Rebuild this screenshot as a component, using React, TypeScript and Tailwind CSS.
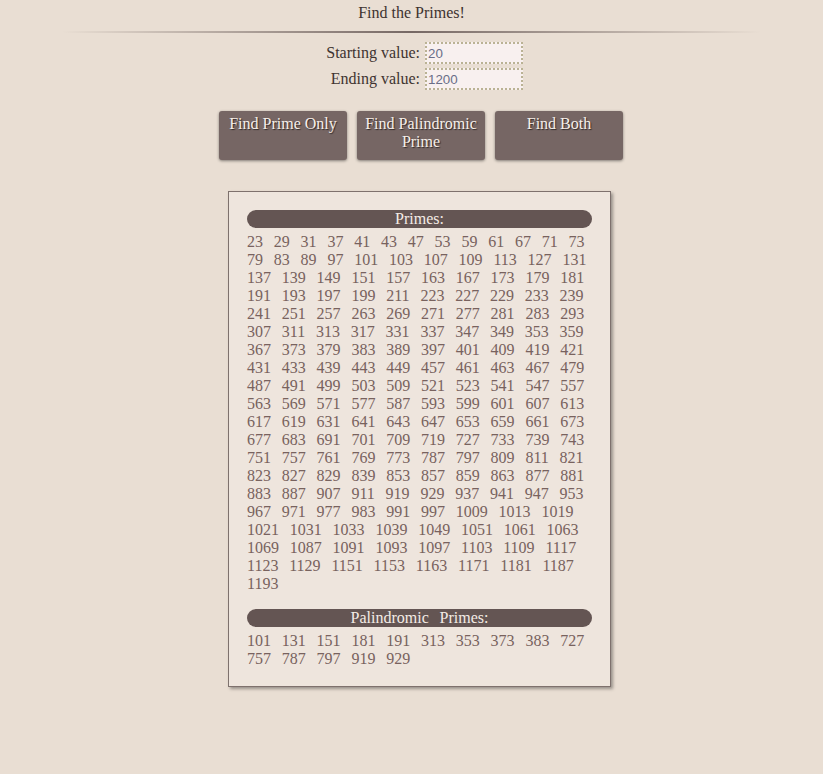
import React from "react";

function isPrime(n: number): boolean {
  if (n < 2) return false;
  for (let i = 2; i * i <= n; i++) if (n % i === 0) return false;
  return true;
}

const primes: number[] = [];
for (let n = 20; n <= 1200; n++) if (isPrime(n)) primes.push(n);
const palPrimes = primes.filter((p) => {
  const s = String(p);
  return s === s.split("").reverse().join("");
});

function Pill({ children }: { children: React.ReactNode }) {
  return (
    <div className="h-[18px] rounded-full bg-[#645553] text-center leading-[18px] text-[#f4ece6]">
      {children}
    </div>
  );
}

function Numbers({ list }: { list: number[] }) {
  return (
    <div className="mt-[5px] text-left leading-[18px] text-[#78625e]">
      {list.join(" ")}
    </div>
  );
}

export default function App() {
  return (
    <div className="min-h-[774px] bg-[#e9ded3] font-['Liberation_Serif',serif] text-[16px] leading-[18px] text-[#3e3330]">
      <div className="pt-[4px] text-center">Find the Primes!</div>
      <div className="mx-auto mt-[9px] h-[2px] w-[85%] bg-linear-to-r from-transparent via-[#766864] to-transparent" />

      <div className="mt-[9px] grid grid-cols-[425px_98px] items-center gap-y-[4px]">
        <label className="pr-[5px] text-right">Starting value:</label>
        <input
          defaultValue="20"
          className="h-[22px] w-[98px] border-2 border-dotted border-[#bab294] bg-[#f8f0ef] px-[1px] font-['Liberation_Sans',sans-serif] text-[13.33px] text-[#6a6e88] outline-none"
        />
        <label className="pr-[5px] text-right">Ending value:</label>
        <input
          defaultValue="1200"
          className="h-[22px] w-[98px] border-2 border-dotted border-[#bab294] bg-[#f8f0ef] px-[1px] font-['Liberation_Sans',sans-serif] text-[13.33px] text-[#6a6e88] outline-none"
        />
      </div>

      <div className="mt-[21px] flex justify-center gap-[10px] pl-[19px]">
        {["Find Prime Only", "Find Palindromic Prime", "Find Both"].map((t) => (
          <button
            key={t}
            className="flex h-[49px] w-[128px] items-start justify-center rounded-[3px] bg-[#766664] px-[6px] pt-[4px] text-center font-['Liberation_Serif',serif] text-[16px] leading-[18px] text-[#f7efe9] shadow-[0_1px_3px_rgba(0,0,0,0.45)] [text-shadow:1px_1px_1px_rgba(0,0,0,0.6)]"
          >
            {t}
          </button>
        ))}
      </div>

      <div className="mt-[31px] flex justify-center pl-[16px]">
        <div className="w-[383px] border border-[#7e716d] bg-[#eee5dd] px-[18px] pb-[18px] pt-[18px] shadow-[2px_2px_3px_rgba(0,0,0,0.35)] [word-spacing:6.8px]">
          <Pill>Primes:</Pill>
          <Numbers list={primes} />
          <div className="mt-[16px]">
            <Pill>Palindromic Primes:</Pill>
          </div>
          <Numbers list={palPrimes} />
        </div>
      </div>
    </div>
  );
}
